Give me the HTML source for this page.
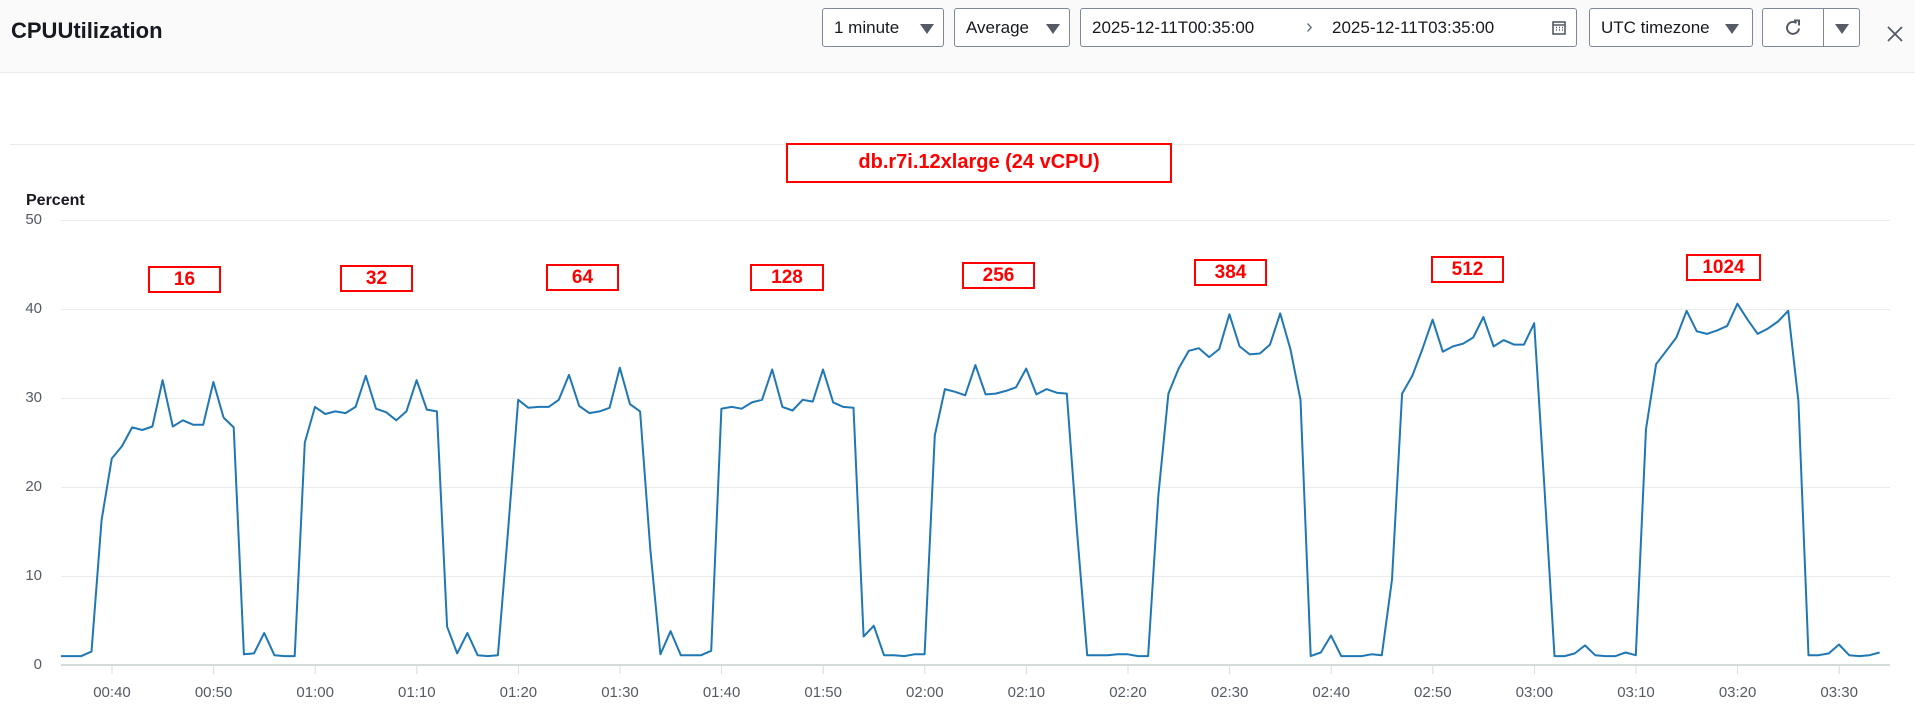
<!DOCTYPE html>
<html><head><meta charset="utf-8"><style>
*{box-sizing:border-box;margin:0;padding:0}
body{width:1915px;height:717px;background:#fff;font-family:"Liberation Sans",sans-serif;position:relative;overflow:hidden;color:#16191f}
.hdr{position:absolute;left:0;top:0;width:1915px;height:73px;background:#fafafa;border-bottom:1px solid #e9ebed}
.title{position:absolute;left:11px;top:18px;font-size:22px;font-weight:bold;color:#16191f}
.btn{position:absolute;top:8px;height:39px;border:1px solid #7d8998;border-radius:3px;background:#fff;font-size:17px;line-height:37px;color:#16191f;padding-left:11px}
.tri{position:absolute;top:15px;width:0;height:0;border-left:7px solid transparent;border-right:7px solid transparent;border-top:10px solid #545b64}
.rb{position:absolute;border:2px solid #f00;color:#f00;font-weight:bold;text-align:center;font-size:19px}
.yl{position:absolute;width:30px;text-align:right;left:12px;font-size:15px;color:#545b64}
.xl{position:absolute;top:684px;width:60px;margin-left:-30px;text-align:center;font-size:15px;color:#545b64}
</style></head><body>
<div class="hdr">
<div class="title">CPUUtilization</div>
<div class="btn" style="left:822px;width:122px">1 minute<div class="tri" style="left:97px"></div></div>
<div class="btn" style="left:954px;width:116px">Average<div class="tri" style="left:91px"></div></div>
<div class="btn" style="left:1080px;width:497px">2025-12-11T00:35:00
<span style="position:absolute;left:225px;top:0;color:#687078;font-size:20px">&#x203A;</span>
<span style="position:absolute;left:251px;top:0">2025-12-11T03:35:00</span>
<svg style="position:absolute;left:471px;top:12px" width="14" height="14" viewBox="0 0 14 14"><rect x="1" y="1" width="12" height="12" fill="none" stroke="#545b64" stroke-width="1.6"/><path d="M1 4h12M4 6.5h1M7 6.5h1M10 6.5h1M4 9h1M7 9h1M10 9h1" stroke="#545b64" stroke-width="1.5"/></svg></div>
<div class="btn" style="left:1589px;width:164px">UTC timezone<div class="tri" style="left:135px"></div></div>
<div class="btn" style="left:1762px;width:98px;padding:0">
<svg style="position:absolute;left:20px;top:9px" width="20" height="20" viewBox="0 0 20 20"><path d="M16 10.5A6 6 0 1 1 13.5 5" fill="none" stroke="#545b64" stroke-width="2"/><path d="M11 2.5h5v5" fill="none" stroke="#545b64" stroke-width="2"/></svg>
<div style="position:absolute;left:60px;top:0;width:1px;height:37px;background:#7d8998"></div>
<div class="tri" style="left:72px"></div></div>
<svg style="position:absolute;left:1886px;top:25px" width="18" height="18" viewBox="0 0 18 18"><path d="M2 2L16 16M16 2L2 16" stroke="#545b64" stroke-width="1.8"/></svg>
</div>
<div style="position:absolute;left:10px;top:144px;width:1905px;height:1px;background:#e9ebed"></div>
<div class="rb" style="left:786px;top:143px;width:386px;height:40px;line-height:35px;font-size:20px">db.r7i.12xlarge (24 vCPU)</div>
<div style="position:absolute;left:26px;top:192px;font-size:16px;font-weight:bold">Percent</div>
<div class="yl" style="top:211px">50</div>
<div class="yl" style="top:300px">40</div>
<div class="yl" style="top:389px">30</div>
<div class="yl" style="top:478px">20</div>
<div class="yl" style="top:567px">10</div>
<div class="yl" style="top:656px">0</div>
<div class="rb" style="left:148px;top:266px;width:73px;height:27px;line-height:23px">16</div>
<div class="rb" style="left:340px;top:265px;width:73px;height:27px;line-height:23px">32</div>
<div class="rb" style="left:546px;top:264px;width:73px;height:27px;line-height:23px">64</div>
<div class="rb" style="left:750px;top:264px;width:74px;height:27px;line-height:23px">128</div>
<div class="rb" style="left:962px;top:262px;width:73px;height:27px;line-height:23px">256</div>
<div class="rb" style="left:1194px;top:259px;width:73px;height:27px;line-height:23px">384</div>
<div class="rb" style="left:1431px;top:256px;width:73px;height:27px;line-height:23px">512</div>
<div class="rb" style="left:1686px;top:254px;width:75px;height:27px;line-height:23px">1024</div>
<svg id="ch" style="position:absolute;left:0;top:0" width="1915" height="717">
<g stroke="#e9ebed" stroke-width="1">
<line x1="61" y1="220.5" x2="1890" y2="220.5"/><line x1="61" y1="309.5" x2="1890" y2="309.5"/><line x1="61" y1="398.5" x2="1890" y2="398.5"/><line x1="61" y1="487.5" x2="1890" y2="487.5"/><line x1="61" y1="576.5" x2="1890" y2="576.5"/>
</g>
<line x1="61" y1="665" x2="1890" y2="665" stroke="#d5dbdb" stroke-width="2"/>
<g id="ticks" stroke="#d5dbdb" stroke-width="1"></g>
<polyline id="pl" fill="none" stroke="#1f77b4" stroke-width="2" stroke-linejoin="round"/>
</svg>
<div id="xls"></div>
<script>
var v=[1,1,1,1.5,16.3,23.2,24.6,26.7,26.4,26.8,32,26.8,27.5,27,27,31.8,27.8,26.7,1.2,1.3,3.6,1.1,1,1,25,29,28.2,28.5,28.3,29,32.5,28.8,28.4,27.5,28.5,32,28.7,28.5,4.3,1.3,3.6,1.1,1,1.1,15,29.8,28.9,29,29,29.8,32.6,29.1,28.3,28.5,28.9,33.4,29.3,28.5,13,1.2,3.8,1.1,1.1,1.1,1.6,28.8,29,28.8,29.5,29.8,33.2,29,28.6,29.8,29.6,33.2,29.5,29,28.9,3.2,4.4,1.1,1.1,1,1.2,1.2,25.8,31,30.7,30.3,33.7,30.4,30.5,30.8,31.2,33.3,30.4,31,30.6,30.5,15,1.1,1.1,1.1,1.2,1.2,1,1,19,30.5,33.3,35.3,35.6,34.6,35.5,39.4,35.8,34.9,35,36,39.5,35.5,29.8,1,1.4,3.3,1,1,1,1.2,1.1,9.6,30.5,32.5,35.5,38.8,35.2,35.8,36.1,36.8,39.1,35.8,36.5,36,36,38.4,20,1,1,1.3,2.2,1.1,1,1,1.4,1.1,26.5,33.8,35.3,36.8,39.8,37.5,37.2,37.6,38.1,40.6,38.8,37.2,37.8,38.6,39.8,29.7,1.1,1.1,1.3,2.3,1.1,1,1.1,1.4];
var p=[];for(var i=0;i<v.length;i++){p.push((61+i*10.16).toFixed(1)+","+(665-8.9*v[i]).toFixed(1));}
document.getElementById('pl').setAttribute('points',p.join(' '));
var t="",h="";for(var k=0;k<18;k++){var x=112+k*101.6;var m=40+k*10;var hh=Math.floor(m/60),mm=m%60;
t+='<line x1="'+x+'" y1="666" x2="'+x+'" y2="674"/>';
h+='<div class="xl" style="left:'+x+'px">0'+hh+':'+(mm<10?'0':'')+mm+'</div>';}
document.getElementById('ticks').innerHTML=t;document.getElementById('xls').innerHTML=h;
</script>
</body></html>
